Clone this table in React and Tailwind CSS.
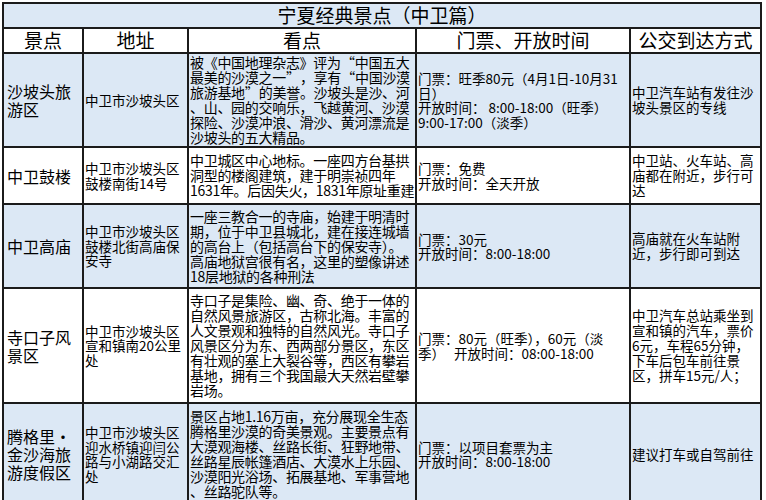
const rows = [
  {
    bg: "bg-[#dce8f5]",
    h: "h-[92px]",
    name: ["沙坡头旅", "游区"],
    addr: ["中卫市沙坡头区"],
    sights: [
      "被《中国地理杂志》评为“中国五大",
      "最美的沙漠之一”，享有“中国沙漠",
      "旅游基地”的美誉。沙坡头是沙、河",
      "、山、园的交响乐，飞越黄河、沙漠",
      "探险、沙漠冲浪、滑沙、黄河漂流是",
      "沙坡头的五大精品。",
    ],
    ticket: [
      "门票：旺季80元（4月1日-10月31",
      "日）",
      "开放时间： 8:00-18:00（旺季）",
      "9:00-17:00（淡季）",
    ],
    bus: ["中卫汽车站有发往沙", "坡头景区的专线"],
  },
  {
    bg: "bg-white",
    h: "h-[55px]",
    name: ["中卫鼓楼"],
    addr: ["中卫市沙坡头区", "鼓楼南街14号"],
    sights: [
      "中卫城区中心地标。一座四方台基拱",
      "洞型的楼阁建筑，建于明崇祯四年",
      "1631年。后因失火，1831年原址重建",
    ],
    ticket: ["门票：免费", "开放时间：全天开放"],
    bus: ["中卫站、火车站、高", "庙都在附近，步行可", "达"],
  },
  {
    bg: "bg-[#dce8f5]",
    h: "h-[82px]",
    name: ["中卫高庙"],
    addr: ["中卫市沙坡头区", "鼓楼北街高庙保", "安寺"],
    sights: [
      "一座三教合一的寺庙，始建于明清时",
      "期，位于中卫县城北，建在接连城墙",
      "的高台上（包括高台下的保安寺）。",
      "高庙地狱宫很有名，这里的塑像讲述",
      "18层地狱的各种刑法",
    ],
    ticket: ["门票：30元", "开放时间：8:00-18:00"],
    bus: ["高庙就在火车站附", "近，步行即可到达"],
  },
  {
    bg: "bg-white",
    h: "h-[113px]",
    name: ["寺口子风", "景区"],
    addr: ["中卫市沙坡头区", "宣和镇南20公里", "处"],
    sights: [
      "寺口子是集险、幽、奇、绝于一体的",
      "自然风景旅游区，古称北海。丰富的",
      "人文景观和独特的自然风光。寺口子",
      "风景区分为东、西两部分景区，东区",
      "有壮观的塞上大裂谷等，西区有攀岩",
      "基地，拥有三个我国最大天然岩壁攀",
      "岩场。",
    ],
    ticket: ["门票：80元（旺季），60元（淡", "季）   开放时间：08:00-18:00"],
    bus: ["中卫汽车总站乘坐到", "宣和镇的汽车，票价", "6元，车程65分钟，", "下车后包车前往景", "区，拼车15元/人；"],
  },
  {
    bg: "bg-[#dce8f5]",
    h: "h-[100px]",
    name: ["腾格里•", "金沙海旅", "游度假区"],
    addr: ["中卫市沙坡头区", "迎水桥镇迎闫公", "路与小湖路交汇", "处"],
    sights: [
      "景区占地1.16万亩，充分展现全生态",
      "腾格里沙漠的奇美景观。主要景点有",
      "大漠观海楼、丝路长街、狂野地带、",
      "丝路星辰帐篷酒店、大漠水上乐园、",
      "沙漠阳光浴场、拓展基地、军事营地",
      "、丝路驼队等。",
    ],
    ticket: ["门票：以项目套票为主", "开放时间：8:00-18:00"],
    bus: ["建议打车或自驾前往"],
  },
];

// quotes take a full cell in the original
function Line({ text }) {
  const parts = text.split(/([“”])/);
  return (
    <div className="whitespace-pre">
      {parts.map((p, i) =>
        p === "“" ? (
          <span key={i} className="inline-block w-[1em] text-right">
            {p}
          </span>
        ) : p === "”" ? (
          <span key={i} className="inline-block w-[1em] text-left">
            {p}
          </span>
        ) : (
          p
        )
      )}
    </div>
  );
}

function Lines({ lines }) {
  return lines.map((l, i) => <Line key={i} text={l} />);
}

export default function App() {
  return (
    <div className="h-[500px] overflow-hidden bg-white pl-[2px] pt-[2px] font-['Noto_Sans_CJK_SC',sans-serif] text-black">
      <div className="grid w-[760px] grid-cols-[78px_103px_226px_212px_129px] gap-[2px] bg-[#1b1b1b] p-[2px]">
        <div className="col-span-5 flex h-[23px] items-center justify-center bg-[#dce8f5] text-[19px]">
          宁夏经典景点（中卫篇）
        </div>
        {["景点", "地址", "看点", "门票、开放时间", "公交到达方式"].map((t) => (
          <div key={t} className="flex h-[23px] items-center justify-center bg-white text-[19px]">
            {t}
          </div>
        ))}
        {rows.map((r, i) => (
          <div key={i} className="contents">
            <div className={`${r.bg} ${r.h} flex flex-col justify-center overflow-hidden px-[3px] text-[16px] leading-[18px]`}>
              <Lines lines={r.name} />
            </div>
            <div className={`${r.bg} ${r.h} flex flex-col justify-center overflow-hidden px-[1px] text-[13.5px] leading-[14.5px]`}>
              <Lines lines={r.addr} />
            </div>
            <div className={`${r.bg} ${r.h} flex flex-col justify-center overflow-hidden px-[1px] text-[14px] leading-[15px] tracking-[-0.3px]`}>
              <Lines lines={r.sights} />
            </div>
            <div className={`${r.bg} ${r.h} flex flex-col justify-center overflow-hidden px-[1px] text-[13.5px] leading-[14.5px]`}>
              <Lines lines={r.ticket} />
            </div>
            <div className={`${r.bg} ${r.h} flex flex-col justify-center overflow-hidden px-[1px] text-[13.5px] leading-[15px]`}>
              <Lines lines={r.bus} />
            </div>
          </div>
        ))}
      </div>
    </div>
  );
}
